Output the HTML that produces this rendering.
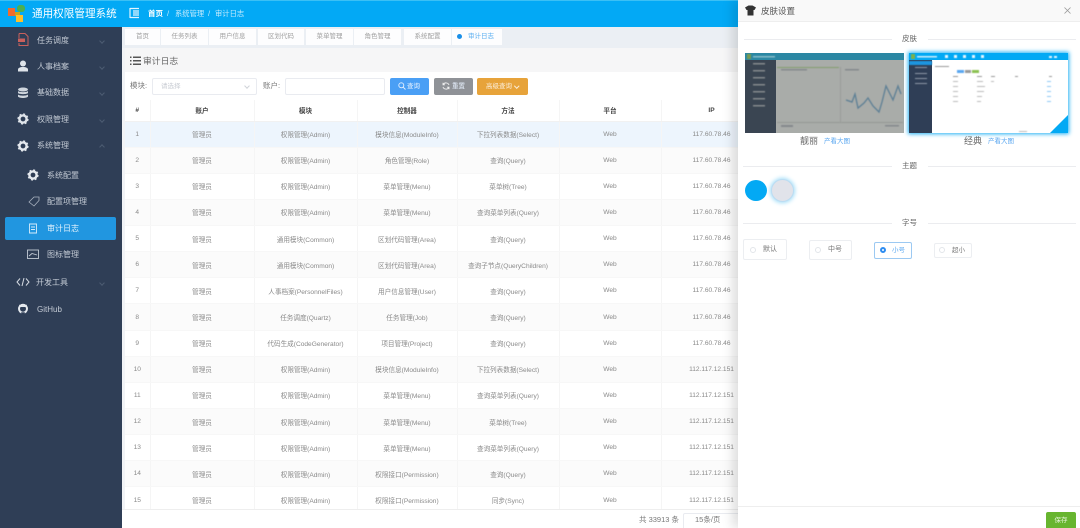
<!DOCTYPE html>
<html lang="zh"><head><meta charset="utf-8"><title>审计日志</title>
<style>
*{box-sizing:border-box}
html,body{margin:0;padding:0;width:1080px;height:528px;overflow:hidden;background:#fff}
body{position:relative;font-family:"Liberation Sans","Noto Sans CJK SC",sans-serif;color:#888}
#w{position:absolute;left:0;top:0;width:1080px;height:528px;overflow:hidden;filter:blur(.35px)}
.a{position:absolute;white-space:nowrap}
#side{left:0;top:27px;width:122px;height:501px;background:#2f3e56}
#top{left:0;top:0;width:1080px;height:27px;background:#03a9f5;border-top:1px solid #3bc0f5}
.m{position:absolute;color:#c3cad4;font-size:8px;line-height:12px}
.chev{position:absolute;width:4px;height:4px;border-right:1px solid #4d5c72;border-bottom:1px solid #4d5c72;transform:rotate(45deg)}
.tab{position:absolute;top:29px;height:16px;background:#fdfdfe;font-size:6.5px;line-height:16px;text-align:center;color:#a0a0a0}
table{position:absolute;left:125px;top:100px;width:637px;border-collapse:collapse;table-layout:fixed;font-size:6.6px;color:#8a8a8a}
th{height:21px;font-size:6.6px;color:#444;font-weight:bold;border-right:1px solid #f5f5f5;border-bottom:1px solid #f1f1f1;padding:0}
td{height:26.15px;text-align:center;border-right:1px solid #f5f5f5;border-bottom:1px solid #f7f7f7;padding:0;white-space:nowrap}
tr:nth-child(even) td{background:#fbfbfb}
tr.h td{background:#edf5fd}
.btn{position:absolute;top:78px;height:17px;border-radius:2px;color:#e8f2ff;font-size:6.5px;line-height:17px}
.box{position:absolute;border:1px solid #e9ebf0;border-radius:2px;background:#fff}
#dr{left:738px;top:0;width:342px;height:528px;background:#fff;box-shadow:-6px 0 10px rgba(0,0,0,.12)}
.line{position:absolute;height:1px;background:#ebecef}
.t{position:absolute;font-size:7.5px;color:#666;line-height:12px}
.r{position:absolute;border:1px solid #eceef1;border-radius:2px;font-size:7px;color:#777;line-height:12px}
.dot{position:absolute;width:6px;height:6px;border:1px solid #e2e5e9;border-radius:50%}
</style></head><body><div id="w">

<div class="a" id="top"></div>

<svg class="a" style="left:8px;top:4px" width="20" height="20" viewBox="0 0 20 20">
<rect x="0" y="4" width="7" height="8" fill="#ef6b2e"/><rect x="9" y="1" width="8" height="7" rx="3" fill="#4caf50"/><rect x="7" y="8" width="5" height="4" fill="#c9a41f"/><rect x="8" y="11" width="7" height="7" fill="#fbc02d"/>
</svg>
<div class="a" style="left:32px;top:6px;font-size:10.6px;line-height:16px;color:#fff">通用权限管理系统</div>
<svg class="a" style="left:129px;top:7px" width="12" height="12" viewBox="0 0 12 12" fill="none" stroke="#e4f5fe" stroke-width="1.2"><path d="M1 1.500H10M1 10.500H10M1 1V11M4 4H10M4 6H10M4 8H10"/></svg>
<div class="a" style="left:148px;top:8px;font-size:7.500px;line-height:11px;color:#fff;font-weight:bold">首页</div>
<div class="a" style="left:167px;top:8px;font-size:7.500px;line-height:11px;color:#c5ebfd">/</div>
<div class="a" style="left:175px;top:8px;font-size:7.300px;line-height:11px;color:#c5ebfd">系统管理</div>
<div class="a" style="left:208px;top:8px;font-size:7.500px;line-height:11px;color:#c5ebfd">/</div>
<div class="a" style="left:215px;top:8px;font-size:7.300px;line-height:11px;color:#c5ebfd">审计日志</div>

<div class="a" id="side">
 <div class="a" style="left:5px;top:190px;width:111px;height:23px;background:#2196e0;border-radius:2px"></div>
 <svg class="a" style="left:16px;top:5px" width="14" height="15" viewBox="0 0 14 15" fill="none" stroke="#c9605c" stroke-width="1"><path d="M3 1.500H9L12 4.500V13.500H3V11M3 6V1.500"/><rect x="2" y="6.500" width="7" height="3.500" fill="#c9605c" stroke="none"/></svg>
 <div class="m" style="left:37px;top:8px">任务调度</div><div class="chev" style="left:100px;top:12px"></div>
 <svg class="a" style="left:17px;top:33px" width="12" height="12" viewBox="0 0 12 12" fill="#dfe4ea"><circle cx="6" cy="3.500" r="3"/><path d="M1 11.500V9.500C1 8 3 7 6 7S11 8 11 9.500V11.500Z"/></svg>
 <div class="m" style="left:37px;top:34px">人事档案</div><div class="chev" style="left:100px;top:38px"></div>
 <svg class="a" style="left:17px;top:60px" width="12" height="12" viewBox="0 0 12 12" fill="#cfd5dd"><ellipse cx="6" cy="2.500" rx="5" ry="2"/><path d="M1 4C2 5.500 10 5.500 11 4V6C10 7.500 2 7.500 1 6ZM1 7.500C2 9 10 9 11 7.500V9.500C10 11.500 2 11.500 1 9.500Z"/></svg>
 <div class="m" style="left:37px;top:60px">基础数据</div><div class="chev" style="left:100px;top:64px"></div>
 <svg class="a" style="left:17px;top:86px" width="12" height="12" viewBox="0 0 12 12"><circle cx="6" cy="6" r="3.600" fill="none" stroke="#dfe4ea" stroke-width="2.400"/><circle cx="6" cy="6" r="5" fill="none" stroke="#dfe4ea" stroke-width="1.200" stroke-dasharray="2 1.930"/></svg>
 <div class="m" style="left:37px;top:87px">权限管理</div><div class="chev" style="left:100px;top:91px"></div>
 <svg class="a" style="left:17px;top:113px" width="12" height="12" viewBox="0 0 12 12"><circle cx="6" cy="6" r="3.600" fill="none" stroke="#e6eaef" stroke-width="2.400"/><circle cx="6" cy="6" r="5" fill="none" stroke="#e6eaef" stroke-width="1.200" stroke-dasharray="2 1.930"/></svg>
 <div class="m" style="left:37px;top:113px">系统管理</div><div class="chev" style="left:100px;top:118px;transform:rotate(225deg)"></div>
 <svg class="a" style="left:27px;top:142px" width="12" height="12" viewBox="0 0 12 12"><circle cx="6" cy="6" r="3.600" fill="none" stroke="#e6eaef" stroke-width="2.400"/><circle cx="6" cy="6" r="5" fill="none" stroke="#e6eaef" stroke-width="1.200" stroke-dasharray="2 1.930"/></svg>
 <div class="m" style="left:47px;top:143px">系统配置</div>
 <svg class="a" style="left:28px;top:169px" width="12" height="11" viewBox="0 0 12 11" fill="none" stroke="#aab3c0" stroke-width=".8"><path d="M1 6L6 1H11V4.500L6 10Z"/></svg>
 <div class="m" style="left:47px;top:169px">配置项管理</div>
 <svg class="a" style="left:28px;top:196px" width="10" height="11" viewBox="0 0 10 11" fill="none" stroke="#d5ecfb" stroke-width=".9"><path d="M1.500 1H8.500V10H1.500ZM3 4H7M3 6.500H7"/></svg>
 <div class="m" style="left:47px;top:196px;color:#e4f3fd">审计日志</div>
 <svg class="a" style="left:27px;top:222px" width="12" height="11" viewBox="0 0 12 11" fill="none" stroke="#c3cad4" stroke-width=".9"><rect x=".5" y="1" width="11" height="8.500"/><path d="M2 7L5 4.500L10 6"/></svg>
 <div class="m" style="left:47px;top:222px">图标管理</div>
 <svg class="a" style="left:16px;top:250px" width="14" height="10" viewBox="0 0 14 10" fill="none" stroke="#d5dae1" stroke-width="1"><path d="M4 1.500L1 5L4 8.500M10 1.500L13 5L10 8.500M8 1L6 9"/></svg>
 <div class="m" style="left:36px;top:250px">开发工具</div><div class="chev" style="left:100px;top:254px"></div>
 <svg class="a" style="left:17px;top:276px" width="12" height="12" viewBox="0 0 12 12"><circle cx="6" cy="5.800" r="4" fill="none" stroke="#e6eaef" stroke-width="2"/><rect x="4.200" y="9.300" width="3.600" height="2.700" fill="#2f3e56"/><path d="M2.200 1.500L4 2.600H8L9.800 1.500V4H2.200Z" fill="#e6eaef"/></svg>
 <div class="m" style="left:37px;top:277px">GitHub</div>
</div>

<div class="a" style="left:122px;top:27px;width:616px;height:21px;background:#ebeff4"></div>
<div class="tab" style="left:125px;width:35px">首页</div>
<div class="tab" style="left:161px;width:47px">任务列表</div>
<div class="tab" style="left:209px;width:47px">用户信息</div>
<div class="tab" style="left:258px;width:46px">区划代码</div>
<div class="tab" style="left:306px;width:47px">菜单管理</div>
<div class="tab" style="left:354px;width:47px">角色管理</div>
<div class="tab" style="left:404px;width:47px">系统配置</div>
<div class="tab" style="left:452px;width:50px;color:#5aaef0;padding-left:8px">审计日志</div>
<div class="a" style="left:457px;top:34px;width:5px;height:5px;border-radius:50%;background:#1a8fe8"></div>

<div class="a" style="left:122px;top:48px;width:616px;height:480px;background:#fff"></div>
<div class="a" style="left:122px;top:48px;width:3px;height:480px;background:#f1f3f6"></div>
<div class="a" style="left:125px;top:48px;width:613px;height:24px;background:#f6f6f7"></div>
<svg class="a" style="left:130px;top:56px" width="11" height="10" viewBox="0 0 11 10" fill="#555"><path d="M0 .5H1.500V2H0ZM0 4H1.500V5.500H0ZM0 7.500H1.500V9H0ZM3 .5H11V2H3ZM3 4H11V5.500H3ZM3 7.500H11V9H3Z"/></svg>
<div class="a" style="left:143px;top:55px;font-size:8.800px;line-height:12px;color:#666">审计日志</div>

<div class="a" style="left:130px;top:80px;font-size:7.500px;line-height:12px;color:#777">模块:</div>
<div class="box" style="left:152px;top:78px;width:105px;height:17px"></div>
<div class="a" style="left:161px;top:81px;font-size:6.500px;line-height:11px;color:#c8ccd3">请选择</div>
<div class="chev" style="left:245px;top:84px;border-color:#d0d3d9"></div>
<div class="a" style="left:263px;top:80px;font-size:7.500px;line-height:12px;color:#777">账户:</div>
<div class="box" style="left:285px;top:78px;width:100px;height:17px"></div>

<div class="btn" style="left:390px;width:39px;background:#4a9ff5;padding-left:17px">查询</div>
<svg class="a" style="left:398px;top:82px" width="8" height="8" viewBox="0 0 8 8" fill="none" stroke="#e8f2ff" stroke-width=".9"><circle cx="3.300" cy="3.300" r="2.500"/><path d="M5.200 5.200L7.500 7.500"/></svg>
<div class="btn" style="left:434px;width:39px;background:#8f9297;padding-left:18px">重置</div>
<svg class="a" style="left:442px;top:82px" width="8" height="8" viewBox="0 0 8 8" fill="none" stroke="#eeeeee" stroke-width=".9"><path d="M7 3A3.200 3.200 0 0 0 1.200 2.500M1 5A3.200 3.200 0 0 0 6.800 5.500M1 .8V2.800H3M7 7.200V5.200H5"/></svg>
<div class="btn" style="left:477px;width:51px;background:#e7a33a;color:#fbeeda;padding-left:9px">高级查询</div>
<div class="chev" style="left:515px;top:84px;border-color:#fbeeda;width:3.500px;height:3.500px"></div>

<table>
<colgroup><col style="width:25px"><col style="width:104px"><col style="width:103px"><col style="width:100px"><col style="width:102px"><col style="width:102px"><col style="width:101px"></colgroup>
<thead><tr><th>#</th><th>账户</th><th>模块</th><th>控制器</th><th>方法</th><th>平台</th><th>IP</th></tr></thead>
<tbody>
<tr class="h"><td>1</td><td>管理员</td><td>权限管理(Admin)</td><td>模块信息(ModuleInfo)</td><td>下拉列表数据(Select)</td><td>Web</td><td>117.60.78.46</td></tr>
<tr><td>2</td><td>管理员</td><td>权限管理(Admin)</td><td>角色管理(Role)</td><td>查询(Query)</td><td>Web</td><td>117.60.78.46</td></tr>
<tr><td>3</td><td>管理员</td><td>权限管理(Admin)</td><td>菜单管理(Menu)</td><td>菜单树(Tree)</td><td>Web</td><td>117.60.78.46</td></tr>
<tr><td>4</td><td>管理员</td><td>权限管理(Admin)</td><td>菜单管理(Menu)</td><td>查询菜单列表(Query)</td><td>Web</td><td>117.60.78.46</td></tr>
<tr><td>5</td><td>管理员</td><td>通用模块(Common)</td><td>区划代码管理(Area)</td><td>查询(Query)</td><td>Web</td><td>117.60.78.46</td></tr>
<tr><td>6</td><td>管理员</td><td>通用模块(Common)</td><td>区划代码管理(Area)</td><td>查询子节点(QueryChildren)</td><td>Web</td><td>117.60.78.46</td></tr>
<tr><td>7</td><td>管理员</td><td>人事档案(PersonnelFiles)</td><td>用户信息管理(User)</td><td>查询(Query)</td><td>Web</td><td>117.60.78.46</td></tr>
<tr><td>8</td><td>管理员</td><td>任务调度(Quartz)</td><td>任务管理(Job)</td><td>查询(Query)</td><td>Web</td><td>117.60.78.46</td></tr>
<tr><td>9</td><td>管理员</td><td>代码生成(CodeGenerator)</td><td>项目管理(Project)</td><td>查询(Query)</td><td>Web</td><td>117.60.78.46</td></tr>
<tr><td>10</td><td>管理员</td><td>权限管理(Admin)</td><td>模块信息(ModuleInfo)</td><td>下拉列表数据(Select)</td><td>Web</td><td>112.117.12.151</td></tr>
<tr><td>11</td><td>管理员</td><td>权限管理(Admin)</td><td>菜单管理(Menu)</td><td>查询菜单列表(Query)</td><td>Web</td><td>112.117.12.151</td></tr>
<tr><td>12</td><td>管理员</td><td>权限管理(Admin)</td><td>菜单管理(Menu)</td><td>菜单树(Tree)</td><td>Web</td><td>112.117.12.151</td></tr>
<tr><td>13</td><td>管理员</td><td>权限管理(Admin)</td><td>菜单管理(Menu)</td><td>查询菜单列表(Query)</td><td>Web</td><td>112.117.12.151</td></tr>
<tr><td>14</td><td>管理员</td><td>权限管理(Admin)</td><td>权限接口(Permission)</td><td>查询(Query)</td><td>Web</td><td>112.117.12.151</td></tr>
<tr><td>15</td><td>管理员</td><td>权限管理(Admin)</td><td>权限接口(Permission)</td><td>同步(Sync)</td><td>Web</td><td>112.117.12.151</td></tr>
</tbody></table>

<div class="a" style="left:122px;top:509px;width:616px;height:19px;background:#fff;border-top:1px solid #eee"></div>
<div class="a" style="left:639px;top:514px;font-size:7.500px;line-height:11px;color:#777">共 33913 条</div>
<div class="box" style="left:683px;top:513px;width:60px;height:18px"></div>
<div class="a" style="left:695px;top:514px;font-size:7.500px;line-height:11px;color:#777">15条/页</div>

<div class="a" id="dr">
 <div class="a" style="left:0;top:0;width:342px;height:22px;background:#f9f9f9;border-bottom:1px solid #eee"></div>
 <svg class="a" style="left:7px;top:5px" width="11" height="11" viewBox="0 0 11 11" fill="#333"><path d="M3.500 .5H7.500L11 2.500L9.500 5H8.500V10.500H2.500V5H1.500L0 2.500Z"/></svg>
 <div class="a" style="left:23px;top:5px;font-size:8.500px;line-height:12px;color:#555">皮肤设置</div>
 <svg class="a" style="left:326px;top:7px" width="7" height="7" viewBox="0 0 7 7" stroke="#999" stroke-width=".8"><path d="M.5 .5L6.500 6.500M6.500 .5L.5 6.500"/></svg>

 <div class="line" style="left:6px;top:39px;width:148px"></div><div class="line" style="left:190px;top:39px;width:148px"></div>
 <div class="t" style="left:164px;top:33px">皮肤</div>

 <svg class="a" style="left:7px;top:53px" width="159" height="80" viewBox="0 0 159 80">
  <rect width="159" height="80" fill="#a9aca9"/>
  <rect width="159" height="7" fill="#2b87a3"/>
  <rect y="7" width="31" height="73" fill="#3a4552"/>
  <g style="filter:blur(.6px)">
  <rect x="2" y="1" width="4" height="5" fill="#7a9a50"/>
  <rect x="8" y="3" width="22" height="1.500" fill="#88bcca"/>
  <rect x="32" y="14" width="62" height="1" fill="#84a070"/>
  <rect x="95" y="14" width="1" height="55" fill="#9a9d9a"/>
  <rect x="32" y="69" width="126" height="1" fill="#969996"/>
  <path d="M100 44L106 46L109 38L112 52L118 47L122 42L127 50L133 56L136 46L140 30L147 44L152 30L155 38" fill="none" stroke="#5d7f95" stroke-width="1.300" transform="translate(1,3)"/>
  <g fill="#858a8d"><rect x="8" y="10" width="12" height="1.500"/><rect x="8" y="17" width="12" height="1.500"/><rect x="8" y="24" width="12" height="1.500"/><rect x="8" y="31" width="12" height="1.500"/><rect x="8" y="38" width="12" height="1.500"/><rect x="8" y="45" width="12" height="1.500"/><rect x="8" y="52" width="12" height="1.500"/><rect x="36" y="16" width="26" height="1.500"/><rect x="100" y="16" width="14" height="1.500"/><rect x="36" y="72" width="12" height="2"/><rect x="140" y="72" width="14" height="1.500"/></g>
  </g>
 </svg>
 <div class="a" style="left:171px;top:53px;width:159px;height:80px;background:#fff;box-shadow:0 0 4px 1px #1fb1f5;overflow:hidden">
  <svg width="159" height="80" viewBox="0 0 159 80" style="display:block">
   <rect width="159" height="7" fill="#03a9f4"/><rect y="7" width="23" height="73" fill="#2f3e56"/>
   <g style="filter:blur(.6px)">
   <rect x="2" y="1" width="4" height="5" fill="#7fb04a"/><rect x="8" y="3" width="20" height="1.500" fill="#cdeefc"/>
   <g fill="#e6f6fe"><rect x="36" y="2" width="3" height="3"/><rect x="45" y="2" width="3" height="3"/><rect x="54" y="2" width="3" height="3"/><rect x="63" y="2" width="3" height="3"/><rect x="72" y="2" width="3" height="3"/><rect x="140" y="3" width="3" height="2"/><rect x="145" y="3" width="3" height="2"/></g>
   <rect y="8" width="23" height="4" fill="#1d95df"/>
   <g fill="#8f99a8"><rect x="6" y="14" width="12" height="1"/><rect x="6" y="20" width="12" height="1"/><rect x="6" y="25" width="12" height="1"/><rect x="6" y="30" width="12" height="1"/></g>
   <rect x="48" y="17" width="7" height="3" fill="#5aa7f0"/><rect x="56" y="17" width="6" height="3" fill="#9a9a9a"/><rect x="63" y="17" width="7" height="3" fill="#8cc152"/>
   <g fill="#999"><rect x="44" y="23" width="5" height="1"/><rect x="68" y="23" width="5" height="1"/><rect x="82" y="23" width="4" height="1"/><rect x="106" y="23" width="3" height="1"/><rect x="140" y="23" width="3" height="1"/><rect x="26" y="13" width="14" height="1"/></g>
   <g fill="#bbb"><rect x="44" y="28" width="5" height="1"/><rect x="68" y="28" width="6" height="1"/><rect x="82" y="28" width="3" height="1"/><rect x="44" y="33" width="5" height="1"/><rect x="68" y="33" width="8" height="1"/><rect x="44" y="38" width="5" height="1"/><rect x="68" y="38" width="7" height="1"/><rect x="44" y="43" width="5" height="1"/><rect x="68" y="43" width="5" height="1"/><rect x="44" y="48" width="5" height="1"/><rect x="68" y="48" width="4" height="1"/><rect x="110" y="78" width="8" height="1"/></g>
   <g fill="#8ec8f5"><rect x="138" y="28" width="4" height="1"/><rect x="138" y="33" width="4" height="1"/><rect x="138" y="38" width="4" height="1"/><rect x="138" y="43" width="4" height="1"/><rect x="138" y="48" width="4" height="1"/></g>
   </g>
   <path d="M159 62V80H141Z" fill="#03a9f4"/>
  </svg>
 </div>
 <div class="a" style="left:62px;top:135px;font-size:9px;line-height:13px;color:#666">靓丽</div>
 <div class="a" style="left:86px;top:136px;font-size:6.500px;line-height:11px;color:#5aa7f0">产看大图</div>
 <div class="a" style="left:226px;top:135px;font-size:9px;line-height:13px;color:#666">经典</div>
 <div class="a" style="left:250px;top:136px;font-size:6.500px;line-height:11px;color:#5aa7f0">产看大图</div>

 <div class="line" style="left:5px;top:166px;width:149px"></div><div class="line" style="left:190px;top:166px;width:148px"></div>
 <div class="t" style="left:164px;top:160px">主题</div>
 <div class="a" style="left:7px;top:180px;width:22px;height:21px;border-radius:50%;background:#03a9f4"></div>
 <div class="a" style="left:33px;top:179px;width:23px;height:23px;border-radius:50%;background:#e1e3ea;border:1px solid #bcdcf2;box-shadow:0 0 4px 1px #9fdcf8"></div>

 <div class="line" style="left:5px;top:223px;width:149px"></div><div class="line" style="left:190px;top:223px;width:148px"></div>
 <div class="t" style="left:164px;top:217px">字号</div>

 <div class="r" style="left:5px;top:239px;width:44px;height:21px;padding:4px 0 0 19px">默认</div><div class="dot" style="left:12px;top:247px"></div>
 <div class="r" style="left:71px;top:240px;width:43px;height:20px;padding:3px 0 0 18px">中号</div><div class="dot" style="left:77px;top:247px"></div>
 <div class="r" style="left:136px;top:242px;width:38px;height:17px;padding:2px 0 0 17px;font-size:6.500px;color:#5aa7f0;border-color:#9cc9f2">小号</div>
 <div class="a" style="left:142px;top:247px;width:6px;height:6px;border:2px solid #2d8cf0;border-radius:50%"></div>
 <div class="r" style="left:196px;top:243px;width:38px;height:15px;padding:1px 0 0 17px;font-size:6.500px">超小</div><div class="dot" style="left:201px;top:247px"></div>

 <div class="line" style="left:0;top:506px;width:342px;background:#eee"></div>
 <div class="a" style="left:308px;top:512px;width:30px;height:16px;background:#67b52f;border-radius:2px 2px 0 0;color:#e9f6dd;font-size:6.500px;line-height:17px;text-align:center">保存</div>
</div>
</div></body></html>
